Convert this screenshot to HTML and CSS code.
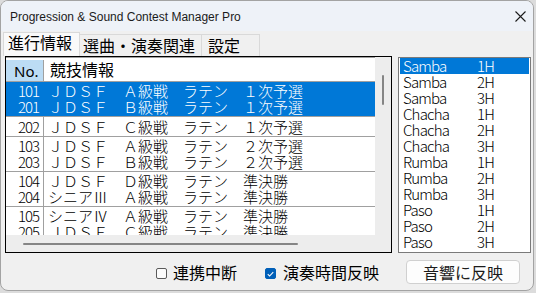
FILE: index.html
```html
<!DOCTYPE html>
<html lang="ja">
<head>
    <meta charset="UTF-8">
    <title>Progression &amp; Sound Contest Manager Pro</title>
    <link rel="stylesheet" href="styles.css">
</head>
<body>

    <div class="window">
        <header class="titlebar">
            <span class="title">Progression &amp; Sound Contest Manager Pro</span>
            <svg class="close-icon" width="11" height="11" viewBox="0 0 11 11">
                <path d="M0.5 0.5 L10.5 10.5 M10.5 0.5 L0.5 10.5" stroke="#1b1b1b" stroke-width="1.1" fill="none"/>
            </svg>
        </header>

        <nav class="tabs">
            <div class="tab tab-progress active">進行情報</div>
            <div class="tab tab-music">選曲・演奏関連</div>
            <div class="tab tab-settings">設定</div>
        </nav>

        <main class="panes">
            <!-- 競技リスト -->
            <div class="listview">
                <div class="lv-content">
                    <div class="lv-head">
                        <div class="col-no">No.</div>
                        <div class="col-info">競技情報</div>
                    </div>
                    <div class="lv-row double selected">
                        <div class="col-no">101<br>201</div>
                        <div class="col-info">ＪＤＳＦ　Ａ級戦　ラテン　１次予選<br>ＪＤＳＦ　Ｂ級戦　ラテン　１次予選</div>
                    </div>
                    <div class="lv-row">
                        <div class="col-no">202</div>
                        <div class="col-info">ＪＤＳＦ　Ｃ級戦　ラテン　１次予選</div>
                    </div>
                    <div class="lv-row double">
                        <div class="col-no">103<br>203</div>
                        <div class="col-info">ＪＤＳＦ　Ａ級戦　ラテン　２次予選<br>ＪＤＳＦ　Ｂ級戦　ラテン　２次予選</div>
                    </div>
                    <div class="lv-row double">
                        <div class="col-no">104<br>204</div>
                        <div class="col-info">ＪＤＳＦ　Ｄ級戦　ラテン　準決勝<br>シニアⅢ　Ａ級戦　ラテン　準決勝</div>
                    </div>
                    <div class="lv-row double">
                        <div class="col-no">105<br>205</div>
                        <div class="col-info">シニアⅣ　Ａ級戦　ラテン　準決勝<br>ＪＤＳＦ　Ｃ級戦　ラテン　準決勝</div>
                    </div>
                </div>
                <div class="vscroll"><span class="vthumb"></span></div>
                <div class="hscroll"><span class="hthumb"></span></div>
            </div>

            <!-- 種目リスト -->
            <ul class="dance-list">
                <li class="selected"><span>Samba</span><span>1H</span></li>
                <li><span>Samba</span><span>2H</span></li>
                <li><span>Samba</span><span>3H</span></li>
                <li><span>Chacha</span><span>1H</span></li>
                <li><span>Chacha</span><span>2H</span></li>
                <li><span>Chacha</span><span>3H</span></li>
                <li><span>Rumba</span><span>1H</span></li>
                <li><span>Rumba</span><span>2H</span></li>
                <li><span>Rumba</span><span>3H</span></li>
                <li><span>Paso</span><span>1H</span></li>
                <li><span>Paso</span><span>2H</span></li>
                <li><span>Paso</span><span>3H</span></li>
            </ul>
        </main>

        <footer class="actions">
            <label class="check">
                <span class="box"></span>
                <span class="check-text">連携中断</span>
            </label>
            <label class="check checked">
                <span class="box">
                    <svg width="12" height="12" viewBox="0 0 12 12">
                        <path d="M3 6.2 L5 8.2 L9 4" stroke="#fff" stroke-width="1.2" fill="none"/>
                    </svg>
                </span>
                <span class="check-text">演奏時間反映</span>
            </label>
            <button class="apply-btn">音響に反映</button>
        </footer>
    </div>

</body>
</html>
```

FILE: styles.css
```css
:root {
    --sel-blue: #0078d7;
    --grid-line: #a0a0a0;
    --face: #f0f0f0;
}

* {
    margin: 0;
    padding: 0;
    box-sizing: border-box;
}

body {
    width: 536px;
    height: 293px;
    background: #dcdcdc;
    font-family: 'Noto Sans CJK JP', sans-serif;
    color: #000;
}

/* --- window frame --- */
.window {
    width: 534px;
    height: 291px;
    border: 1px solid #a3a3a3;
    border-radius: 8px;
    overflow: hidden;
    background: var(--face);
    display: flex;
    flex-direction: column;
}

.titlebar {
    height: 30px;
    background: #eef2f8;
    display: flex;
    align-items: center;
    padding-left: 9px;
}
.title {
    font-family: 'Liberation Sans', sans-serif;
    font-size: 12px;
    color: #1b1b1b;
    padding-top: 1px;
}
.close-icon {
    margin-left: auto;
    margin-right: 7px;
}

/* --- tabs --- */
.tabs {
    height: 25px;
    display: flex;
    align-items: flex-end;
    padding-left: 2px;
}
.tab {
    height: 22px;
    border: 1px solid #d9d9d9;
    border-bottom: none;
    background: var(--face);
    font-size: 16px;
    line-height: 16px;
    padding-top: 2px;
    white-space: nowrap;
}
.tab.active {
    height: 24px;
    padding-top: 1px;
    background: #f9f9f9;
}
.tab-progress { width: 77px; padding-left: 4px; }
.tab-music { width: 122px; padding-left: 3px; border-left: none; }
.tab-settings { width: 58px; padding-left: 6px; border-left: none; }

/* --- main panes --- */
.panes {
    display: flex;
    gap: 6px;
    padding: 0 2px 0 4px;
}

.listview {
    width: 387px;
    height: 197px;
    border: 1px solid #000;
    display: grid;
    grid-template-columns: 369px 16px;
    grid-template-rows: 178px 17px;
    background: #ededed;
}
.lv-content {
    background: #fff;
    overflow: hidden;
    font-size: 15px;
    font-weight: 300;
    line-height: 16px;
}
.lv-head,
.lv-row {
    display: flex;
    border-bottom: 1px solid var(--grid-line);
}
.lv-head {
    height: 25px;
    border-top: 1px solid var(--grid-line);
    font-size: 16px;
    font-weight: 400;
}
.lv-head .col-no {
    margin-top: 2px;
    background: #bcdcf4;
    text-align: left;
    padding-left: 8px;
    font-family: 'Noto Sans', sans-serif;
    font-size: 15px;
    letter-spacing: 0;
    line-height: 20px;
}
.lv-head .col-info {
    line-height: 21px;
    padding-left: 6px;
    padding-top: 1px;
}

.lv-row {
    height: 20px;
    align-items: center;
}
.lv-row.double {
    height: 35px;
}
.col-no {
    width: 38px;
    align-self: stretch;
    display: flex;
    flex-direction: column;
    justify-content: center;
    text-align: right;
    padding-right: 4px;
    border-right: 1px solid var(--grid-line);
    font-size: 15px;
    letter-spacing: -1px;
    line-height: 16px;
}
.col-info {
    padding-left: 4px;
    white-space: nowrap;
}
.lv-row.selected {
    background: var(--sel-blue);
    color: #fff;
}
.lv-row.selected .col-no {
    border-right-color: var(--sel-blue);
}

.vscroll {
    padding: 18px 0 0 7px;
}
.vthumb {
    display: block;
    width: 2px;
    height: 30px;
    border-radius: 1px;
    background: #858585;
}
.hscroll {
    grid-column: 1 / -1;
    display: flex;
    align-items: center;
    padding-left: 17px;
}
.hthumb {
    width: 275px;
    height: 2px;
    border-radius: 1px;
    background: #858585;
}

/* --- dance list --- */
.dance-list {
    list-style: none;
    width: 133px;
    height: 196px;
    margin-top: 1px;
    border: 1px solid #7a7a7a;
    padding: 0 1px;
    background: #fff;
    font-size: 15px;
    font-weight: 300;
    letter-spacing: -0.8px;
    line-height: 16px;
}
.dance-list li {
    height: 16px;
    display: flex;
    justify-content: space-between;
    padding: 0 35px 0 3px;
}
.dance-list li.selected {
    background: var(--sel-blue);
    color: #fff;
}

/* --- bottom actions --- */
.actions {
    margin-top: 7px;
    height: 24px;
    display: flex;
    justify-content: flex-end;
    align-items: center;
    padding-right: 13px;
    font-size: 16px;
    line-height: 16px;
}
.check {
    display: flex;
    align-items: center;
    gap: 6px;
    margin-right: 28px;
}
.check + .check {
    margin-right: 27px;
}
.box {
    width: 11px;
    height: 11px;
    margin-top: 3px;
    border: 1px solid #5a5a5a;
    border-radius: 2px;
    background: #fbfbfb;
    display: flex;
}
.check.checked .box {
    border-color: #005fb8;
    background: #005fb8;
}
.check.checked .box svg {
    margin: -1px;
}
.check.checked .check-text {
    margin-left: 1px;
}

.apply-btn {
    width: 114px;
    height: 24px;
    border: 1px solid #d0d0d0;
    border-radius: 4px;
    background: #fdfdfd;
    font-family: 'Noto Sans CJK JP', sans-serif;
    font-size: 16px;
    line-height: 16px;
    color: #1b1b1b;
}
```
